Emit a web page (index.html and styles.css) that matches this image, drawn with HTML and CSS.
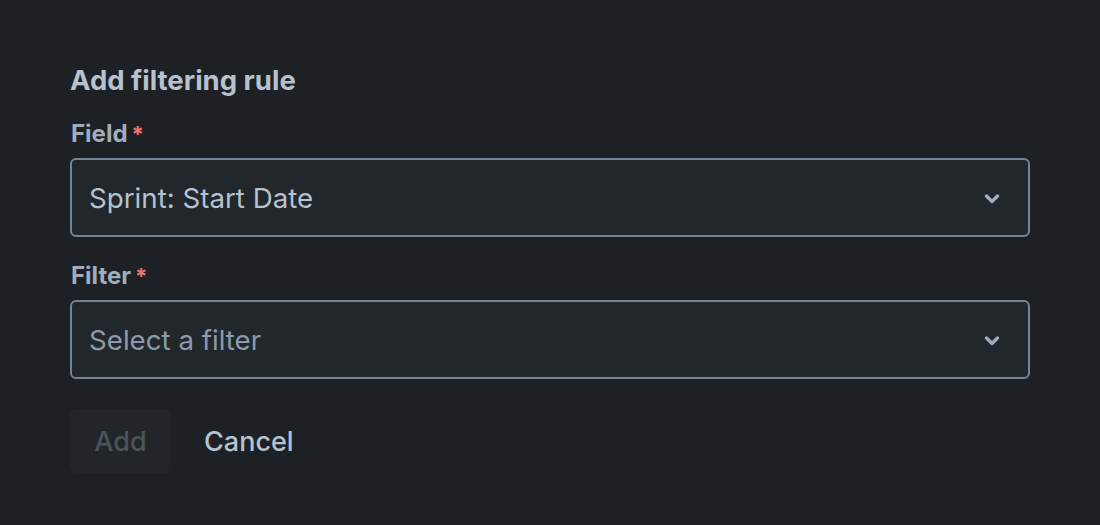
FILE: index.html
```html
<!DOCTYPE html>
<html>
<head>
<meta charset="utf-8">
<link rel="stylesheet" href="styles.css">
</head>
<body>
<form class="form">
  <h2 class="title">Add filtering rule</h2>
  <div class="field">
    <label class="label">Field<span class="req">*</span></label>
    <div class="select">
      <span class="value">Sprint: Start Date</span>
      <svg class="chev" width="24" height="24" viewBox="0 0 24 24"><path d="M6.5 10l5.5 5.5 5.5-5.5" fill="none" stroke="currentColor" stroke-width="3.4" stroke-linecap="round" stroke-linejoin="round"/></svg>
    </div>
  </div>
  <div class="field">
    <label class="label">Filter<span class="req">*</span></label>
    <div class="select">
      <span class="placeholder">Select a filter</span>
      <svg class="chev" width="24" height="24" viewBox="0 0 24 24"><path d="M6.5 10l5.5 5.5 5.5-5.5" fill="none" stroke="currentColor" stroke-width="3.4" stroke-linecap="round" stroke-linejoin="round"/></svg>
    </div>
  </div>
  <div class="actions">
    <button type="button" class="btn btn-add" disabled>Add</button>
    <button type="button" class="btn btn-cancel">Cancel</button>
  </div>
</form>
</body>
</html>
```
FILE: styles.css
```css
html, body {
  margin: 0;
  padding: 0;
  background: #1d2125;
  height: 100%;
}
body {
  font-family: Inter, "Noto Sans", sans-serif;
  color: #b6c2cf;
}
.form {
  padding: 64px 70px 0 70px;
  display: flex;
  flex-direction: column;
}
.title {
  margin: 0;
  font-size: 27.5px;
  line-height: 32px;
  font-weight: 700;
  color: #b6c2cf;
}
.field {
  display: flex;
  flex-direction: column;
  margin-top: 22px;
}
.field + .field {
  margin-top: 23px;
}
.label {
  font-size: 24px;
  line-height: 32px;
  font-weight: 700;
  color: #9fadbc;
  margin-left: 1px;
  margin-bottom: 8px;
}
.req {
  color: #f87168;
  margin-left: 4px;
  font-size: 22px;
}
.select {
  box-sizing: border-box;
  height: 79px;
  width: 960px;
  border: 2px solid #738496;
  border-radius: 6px;
  background: #22272b;
  display: flex;
  align-items: center;
  justify-content: space-between;
  padding: 0 24px 0 17px;
  font-size: 27.7px;
}
.value { color: #b6c2cf; }
.placeholder { color: #8c9bab; }
.chev { color: #9fadbc; }
.actions {
  display: flex;
  align-items: center;
  gap: 8px;
  margin-top: 30px;
}
.btn {
  font-family: inherit;
  font-size: 27px;
  font-weight: 500;
  border: none;
  border-radius: 6px;
  height: 64px;
  padding: 0 24px;
  background: transparent;
}
.btn-add {
  width: 101px;
  background: #22262a;
  color: #4b535b;
}
.btn-cancel {
  color: #b6c2cf;
  padding: 0 25px;
}
```
